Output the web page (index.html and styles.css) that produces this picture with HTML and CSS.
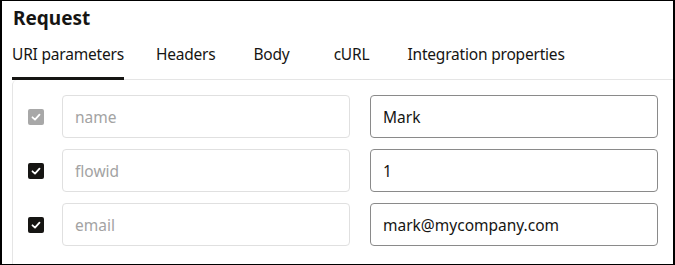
FILE: index.html
```html
<!DOCTYPE html>
<html lang="en">
<head>
  <meta charset="UTF-8" />
  <meta name="viewport" content="width=device-width, initial-scale=1.0"/>
  <title>Request</title>
  <link rel="stylesheet" href="styles.css">
</head>
<body>

<div class="frame">
  <h1 class="title">Request</h1>

  <div class="tabs">
    <span class="tab active">URI parameters</span>
    <span class="tab">Headers</span>
    <span class="tab">Body</span>
    <span class="tab">cURL</span>
    <span class="tab">Integration properties</span>
  </div>

  <div class="panel">
    <div class="param-row">
      <span class="check disabled">
        <svg viewBox="0 0 16 16" width="16" height="16"><path d="M4.5 8.3 L7 10.6 L11.5 5.6" fill="none" stroke="#fff" stroke-width="1.8" stroke-linecap="round" stroke-linejoin="round"/></svg>
      </span>
      <input class="field key" type="text" placeholder="name" disabled />
      <input class="field value" type="text" value="Mark" />
    </div>
    <div class="param-row">
      <span class="check">
        <svg viewBox="0 0 16 16" width="16" height="16"><path d="M4.5 8.3 L7 10.6 L11.5 5.6" fill="none" stroke="#fff" stroke-width="1.8" stroke-linecap="round" stroke-linejoin="round"/></svg>
      </span>
      <input class="field key" type="text" placeholder="flowid" disabled />
      <input class="field value" type="text" value="1" />
    </div>
    <div class="param-row">
      <span class="check">
        <svg viewBox="0 0 16 16" width="16" height="16"><path d="M4.5 8.3 L7 10.6 L11.5 5.6" fill="none" stroke="#fff" stroke-width="1.8" stroke-linecap="round" stroke-linejoin="round"/></svg>
      </span>
      <input class="field key" type="text" placeholder="email" disabled />
      <input class="field value" type="text" value="mark@mycompany.com" />
    </div>
  </div>
</div>

</body>
</html>
```

FILE: styles.css
```css
body {
  margin: 0;
  font-family: 'Noto Sans', sans-serif;
  color: #161513;
  background: white;
}

.frame {
  width: 675px;
  height: 265px;
  box-sizing: border-box;
  border: solid black;
  border-width: 1px 2px;
  padding-left: 10px;
  overflow: hidden;
}

.title {
  font-size: 19px;
  font-weight: bold;
  margin: 0;
  padding-left: 1px;
  line-height: 22px;
  padding-top: 6px;
}

.tabs {
  display: flex;
  gap: 32px;
  margin-top: 14px;
  border-bottom: 1px solid #e5e5e5;
}

.tab {
  min-width: 48px;
  text-align: center;
  font-size: 15.5px;
  line-height: 22px;
  padding-bottom: 12px;
  letter-spacing: -0.2px;
  border-bottom: 3px solid transparent;
  margin-bottom: -1px;
}

.tab.active {
  border-bottom-color: #161513;
}

.panel {
  border-left: 1px solid #e5e5e5;
  border-top-left-radius: 5px;
  padding: 15px 0 0 15px;
  display: flex;
  flex-direction: column;
  gap: 11px;
  height: 200px;
}

.param-row {
  display: flex;
  align-items: center;
}

.check {
  width: 16px;
  height: 16px;
  border-radius: 2px;
  background: #161513;
  display: flex;
  margin-right: 18px;
}

.check.disabled {
  background: #a8a8a8;
}

.field {
  width: 288px;
  height: 43px;
  box-sizing: border-box;
  border: 1px solid #8a8a8a;
  border-radius: 4px;
  padding: 0 12px;
  font-family: 'Noto Sans', sans-serif;
  font-size: 15.5px;
  color: #161513;
  background: white;
}

.field.key {
  border-color: #e0e0e0;
  margin-right: 20px;
}

.field::placeholder {
  color: #a3a3a3;
}
```
